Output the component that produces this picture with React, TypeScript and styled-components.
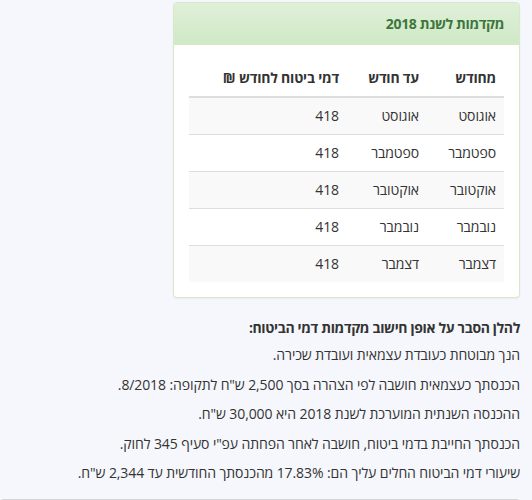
import * as React from "react";
import styled, { createGlobalStyle } from "styled-components";

const GlobalStyle = createGlobalStyle`
	html, body {
		margin: 0;
		padding: 0;
		background: #f5f7fc;
	}
	body {
		font-family: "Open Sans", sans-serif;
		font-size: 14px;
		line-height: 20px;
		letter-spacing: -0.1px;
		color: #333;
	}
`;

const Page = styled.div`
	direction: rtl;
	width: 520px;
	padding-top: 2px;
`;

const Panel = styled.div`
	width: 345px;
	margin-bottom: 20px;
	background: #fff;
	border: 1px solid #d6e9c6;
	border-radius: 4px;
	box-shadow: 0 1px 2px rgba(0, 0, 0, 0.05);
	overflow: hidden;
`;

const PanelHeading = styled.div`
	padding: 11px 15px 10px;
	background: linear-gradient(to bottom, #dff0d8 0%, #d0e9c6 100%);
	border-bottom: 1px solid #d6e9c6;
	color: #3c763d;
`;

const PanelTitle = styled.h3`
	margin: 0;
	font-size: 14px;
	font-weight: bold;
	line-height: 20px;
	letter-spacing: -0.35px;
`;

const PanelBody = styled.div`
	padding: 15px;
`;

const Table = styled.table`
	width: 100%;
	table-layout: fixed;
	border-collapse: collapse;
	border-spacing: 0;
`;

const Th = styled.th<{ $w?: number }>`
	box-sizing: border-box;
	width: ${(p) => (p.$w ? `${p.$w}px` : "auto")};
	padding: 8px;
	text-align: right;
	font-weight: bold;
	line-height: 20px;
	letter-spacing: -0.2px;
	white-space: nowrap;
	border-bottom: 2px solid #ddd;
`;

const Body = styled.tbody`
	& > tr:first-child > td {
		border-top: 0;
	}
`;

const Row = styled.tr`
	&:nth-child(odd) {
		background: #f9f9f9;
	}
`;

const Td = styled.td`
	padding: 8px;
	line-height: 20px;
	text-align: right;
	border-top: 1px solid #ddd;
`;

const Para = styled.p<{ $bold?: boolean }>`
	margin: 0 0 ${(p) => (p.$bold ? "7px" : "9.5px")};
	font-weight: ${(p) => (p.$bold ? "bold" : "normal")};
	letter-spacing: ${(p) => (p.$bold ? "-0.35px" : "-0.1px")};
`;

const NextBox = styled.div`
	margin-top: 16px;
	height: 20px;
	border: 1px solid #d4d4d4;
	border-bottom: 0;
	border-radius: 4px 4px 0 0;
	background: #f5f7fc;
`;

const months = ["אוגוסט", "ספטמבר", "אוקטובר", "נובמבר", "דצמבר"];

export default function App() {
	return (
		<>
			<GlobalStyle />
			<Page>
				<Panel>
					<PanelHeading>
						<PanelTitle>מקדמות לשנת 2018</PanelTitle>
					</PanelHeading>
					<PanelBody>
						<Table>
							<thead>
								<tr>
									<Th $w={77}>מחודש</Th>
									<Th $w={80}>עד חודש</Th>
									<Th>דמי ביטוח לחודש ₪</Th>
								</tr>
							</thead>
							<Body>
								{months.map((m) => (
									<Row key={m}>
										<Td>{m}</Td>
										<Td>{m}</Td>
										<Td>418</Td>
									</Row>
								))}
							</Body>
						</Table>
					</PanelBody>
				</Panel>
				<Para $bold>להלן הסבר על אופן חישוב מקדמות דמי הביטוח:</Para>
				<Para>הנך מבוטחת כעובדת עצמאית ועובדת שכירה.</Para>
				<Para>הכנסתך כעצמאית חושבה לפי הצהרה בסך 2,500 ש"ח לתקופה: 8/2018.</Para>
				<Para>ההכנסה השנתית המוערכת לשנת 2018 היא 30,000 ש"ח.</Para>
				<Para>הכנסתך החייבת בדמי ביטוח, חושבה לאחר הפחתה עפ"י סעיף 345 לחוק.</Para>
				<Para>שיעורי דמי הביטוח החלים עליך הם: 17.83% מהכנסתך החודשית עד 2,344 ש"ח.</Para>
				<NextBox />
			</Page>
		</>
	);
}
